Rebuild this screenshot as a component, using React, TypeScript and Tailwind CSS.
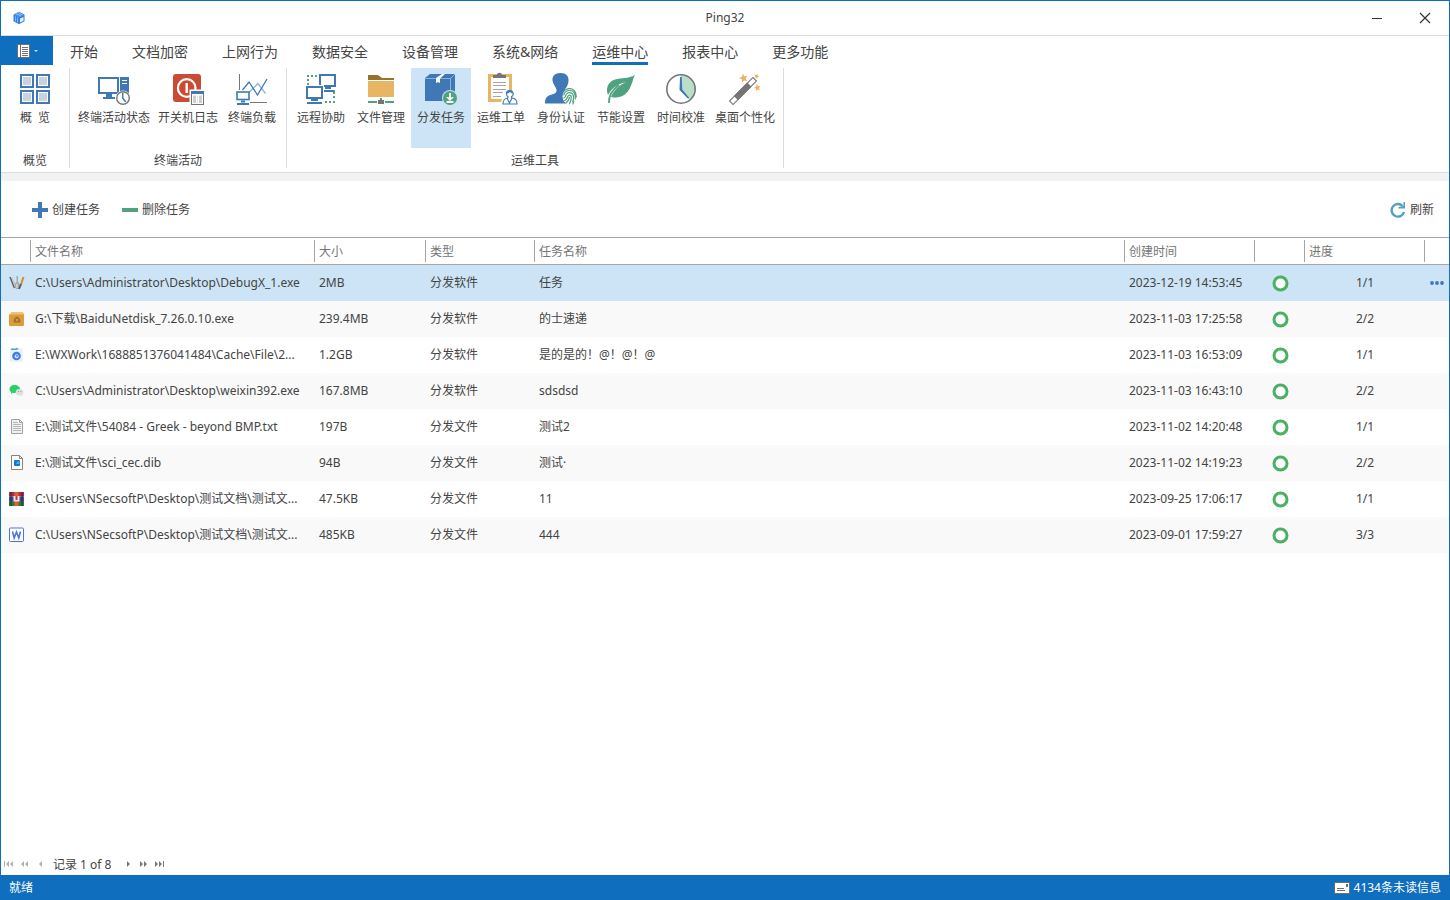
import React, { useState } from 'react';

interface Tool {
  label: string;
  icon: React.ReactNode;
}

interface ToolGroup {
  name: string;
  tools: Tool[];
}

interface Task {
  icon: React.ReactNode;
  file: string;
  size: string;
  type: string;
  name: string;
  created: string;
  progress: string;
}

const BLUE = '#3f78b4';
const GREEN = '#4fa17f';
const GRAY = '#757575';

const Icon32: React.FC<{ children: React.ReactNode }> = ({ children }) => (
  <svg width="32" height="32" viewBox="0 0 32 32" fill="none" aria-hidden="true" className="shrink-0 overflow-visible">
    {children}
  </svg>
);

const Icon16: React.FC<{ children: React.ReactNode }> = ({ children }) => (
  <svg width="16" height="16" viewBox="0 0 16 16" fill="none" aria-hidden="true" className="block">
    {children}
  </svg>
);

/* ---------- Ribbon icons ---------- */

const OverviewIcon = () => (
  <Icon32>
    {[[1, 1], [17, 1], [1, 17], [17, 17]].map(([x, y]) => (
      <g key={`${x}-${y}`}>
        <rect x={x + 1} y={y + 1} width="12" height="12" stroke={BLUE} strokeWidth="2" />
        <rect x={x + 3} y={y + 3} width="8" height="8" fill="#c5d3e5" />
      </g>
    ))}
  </Icon32>
);

const StatusIcon = () => (
  <Icon32>
    <rect x="1" y="5" width="19" height="15" stroke={BLUE} strokeWidth="2" />
    <path d="M8 21h6v3h3v2H5v-2h3z" fill={BLUE} />
    <rect x="22" y="4" width="9" height="22" fill={BLUE} />
    <path d="M24 7.5h5M24 10.5h5" stroke="#fff" strokeWidth="1" />
    <circle cx="25" cy="25" r="7.5" fill="#fff" />
    <circle cx="25" cy="25" r="6.3" fill="#fff" stroke={GRAY} strokeWidth="1.4" />
    <path d="M24.7 20v5l3 4" stroke={BLUE} strokeWidth="1.5" />
  </Icon32>
);

const PowerLogIcon = () => (
  <Icon32>
    <rect x="1" y="1" width="28" height="28" rx="3" fill="#cb4a33" />
    <circle cx="14.7" cy="15" r="8.8" stroke="#fff" strokeWidth="2.2" />
    <path d="M14.7 10v10" stroke="#fff" strokeWidth="2.4" />
    <rect x="17.5" y="16.5" width="15" height="16" fill="#fff" />
    <rect x="19.5" y="18.5" width="12" height="13" fill="#fff" stroke={GRAY} />
    <rect x="19" y="18" width="13" height="3" fill={BLUE} />
    <rect x="21" y="22.5" width="3" height="7.5" fill="#cfcfcf" />
    <rect x="27" y="22.5" width="3" height="7.5" fill="#cfcfcf" />
    <path d="M25.5 22.5v7.5" stroke="#dedede" />
  </Icon32>
);

const LoadIcon = () => (
  <Icon32>
    <path d="M3.5 1v16M14 29.5h17" stroke={GRAY} />
    <path d="M12.5 20 22 10.5l7.5 10" stroke="#8fb4dc" strokeWidth="1.3" />
    <path d="M6.5 17 13 9l8.5 13L31 6" stroke={BLUE} strokeWidth="1.3" />
    <rect x="1" y="19" width="12" height="7.5" fill="#fff" stroke={BLUE} strokeWidth="1.6" />
    <path d="M5 28.5h4M1 31h12" stroke={BLUE} strokeWidth="2" />
  </Icon32>
);

const RemoteIcon = () => (
  <Icon32>
    <path
      d="M2 2h2v2H2zM6 2h2v2H6zM10 2h2v2h-2zM2 6h2v2H2zM2 10h2v2H2zM28 19h2v2h-2zM28 23h2v2h-2zM28 28h2v2h-2zM24 28h2v2h-2zM20 28h2v2h-2z"
      fill={GREEN}
    />
    <rect x="15" y="2" width="15" height="11" fill="#fff" stroke={BLUE} strokeWidth="2" />
    <path d="M20 15h6" stroke={BLUE} strokeWidth="2" />
    <path d="M18.5 17.5h11v1h-11z" stroke={BLUE} />
    <rect x="0" y="12" width="19" height="16" fill="#fff" />
    <rect x="2" y="14" width="15" height="11" fill="#fff" stroke={BLUE} strokeWidth="2" />
    <path d="M6 27h7" stroke={BLUE} strokeWidth="2" />
    <rect x="2.5" y="29.5" width="14" height="1" stroke={BLUE} />
  </Icon32>
);

const FolderIcon = () => (
  <Icon32>
    <path d="M3 2h10l4 3h12v2H3z" fill="#96732f" />
    <rect x="3" y="8" width="26" height="16" fill="#e8b564" />
    <path d="M3 29h26M16 25v3" stroke={GREEN} strokeWidth="2" />
    <path d="M12 28h8v3h-8z" fill="#fff" />
    <path d="M13 27h6v4h-6z" fill={GRAY} />
  </Icon32>
);

const PackageIcon = () => (
  <Icon32>
    <path d="M5 1h25v22l-4 5H0V5z" fill={BLUE} />
    <path d="M0 5.500h25.500V28M25.500 5.500 30 1" stroke="#a9c8e4" strokeWidth=".7" />
    <path d="M17 1h3l-5 4.500V10l-2-1-2 1V5z" fill="#fff" />
    <circle cx="25" cy="25" r="8" fill="#cce4f6" />
    <circle cx="25" cy="25" r="7" fill={GREEN} />
    <path d="M25 20v6M21.500 29h7" stroke="#fff" strokeWidth="1.800" />
    <path d="m21 24 4 4 4-4h-2l-2 1.500-2-1.500z" fill="#fff" />
  </Icon32>
);

const WorkOrderIcon = () => (
  <Icon32>
    <rect x="4.500" y="2.500" width="21" height="25" fill="#fff" stroke="#e8b564" strokeWidth="3" />
    <path d="M8 5V2h4c0-3 5-3 5 0h4v3z" fill={GRAY} />
    <path d="M8 9.500h13M8 12.500h13M8 16.500h13M8 19.500h10M8 23.500h8" stroke="#a5a5a5" />
    <path d="M16 32.500c0-7 2-8.500 5-9.500-3-8 9-8 6.500 0 3.500 1 5.500 3 5.500 9.500z" fill="#fff" />
    <path
      d="M24.500 17.500c-4 0-3.500 5-1.500 6.200v1c-3.500.8-5 2-5 6.300h14c0-4.300-1.500-5.500-5.500-6.300v-1c2.500-1.200 2.500-6.200-2-6.200zM22 25l2.500 5 2.500-5"
      stroke={BLUE}
      strokeWidth="1.100"
    />
    <path d="M21 20.500c2 0 3-.5 4-1.500 1 1 2 1.500 3 1.500-1-4.500-6-4.500-7 0z" fill={BLUE} />
  </Icon32>
);

const IdentityIcon = () => (
  <Icon32>
    <path
      d="M15.500 0C21 0 24 3 23.500 8c-.3 3-1.500 5.500-3 7.500-1 1.500-.5 4 1 5l3 1.500v8.500H0c0-5 1.500-7.500 6-8.700 4-1.100 6-2 5.500-5C11 14 8 11.500 7.500 7.500 7 3 10 0 15.500 0z"
      fill={BLUE}
    />
    <circle cx="25.5" cy="23.5" r="8" fill="#fff" />
    <g stroke={GREEN} strokeWidth="1.2" strokeLinecap="round">
      <path d="M20.500 17c2.700-2 6.800-1.700 9 .8 1.500 1.800 1.800 3.700 1.800 6.200M18.800 22c.6-2.500 3-4.500 6-4.500 4 0 6 3 5.500 8.500" />
      <path d="M18.800 25c2-.5 1.500-2.500 2.700-4 2-2.500 6.800-1.500 7 2.500.1 2 0 3.500-.7 5.500" />
      <path d="M19.500 27.500c3-.8 2.700-3.500 3.800-4.800 1-1 3-.4 3 1.300 0 2.500-.5 4.500-1.800 6.800" />
      <path d="M21 29.500c2-1 3-3 3.400-5.200M28 31l.8-2.500" />
    </g>
  </Icon32>
);

const LeafIcon = () => (
  <Icon32>
    <path d="M30 2c-2 3-2 7-5 13-3.500 7-10 11-19 9 3-7 7-11 15-15C12 11 6 16 3 22 .5 15 3 9 10 6.500 17 4.500 23 6 30 2z" fill={GREEN} />
    <path d="M4 30c-.5-7 3-13 10-18" stroke={GREEN} strokeWidth="1.8" />
  </Icon32>
);

const TimeIcon = () => (
  <Icon32>
    <circle cx="16" cy="16" r="14" fill="#fff" />
    <path d="M15.500 2A14 14 0 0 1 25.500 26.500L15.500 17z" fill="#b9dfca" />
    <circle cx="16" cy="16" r="14.200" stroke={GRAY} strokeWidth="1.600" />
    <path d="m15 4 1.700.1.600 12.400 7 8.500-1.200.7-8.600-8.700z" fill={BLUE} />
  </Icon32>
);

const WandIcon = () => (
  <Icon32>
    <g transform="rotate(-45 14 18)">
      <rect x="-2.500" y="15.500" width="33" height="5" fill="#fff" stroke={GRAY} strokeWidth="1.100" />
      <rect x="4" y="15" width="19" height="6" fill={GRAY} />
    </g>
    <path d="m14 .5 1.200 2.700 3.100-.2-1.700 2.500 1.600 2.700-3-.8L13 9.500l-.2-3.200L10 5l2.900-1.200z" fill="#e8b564" />
    <path d="m28.500.8.1 1.800 1.700.8-1.700.7-.3 1.900-1.300-1.400-1.900.2 1-1.600-.8-1.700 1.900.4zM28 11l1 2 2.300-.1-1.300 2 1 2-2.300-.5-1.600 1.600-.2-2.300-2-1 2-1z" fill="#e8b564" />
  </Icon32>
);

/* ---------- File type icons ---------- */

const DebugIcon = () => (
  <Icon16>
    <path d="m1 2 4.500 11" stroke="#5f656b" strokeWidth="1.600" />
    <path d="m3 2.500 3.500 9" stroke="#c3c6c9" strokeWidth="1.600" />
    <path d="M7.500 1h1.500v6l1.500 1.500v3.500l-1.500 2H7l-1-2V8.500L7.500 7z" fill="#a4a9ad" />
    <path d="M8 9v4" stroke="#eef0f1" />
    <path d="M14.500 2 12 9.500" stroke="#d08f2c" strokeWidth="2" />
    <path d="m12 9-2 5" stroke="#5a5d60" strokeWidth="2" />
  </Icon16>
);

const BaiduBoxIcon = () => (
  <Icon16>
    <path d="M3 1h10l2 2v10.500c0 1-.5 1.500-1.500 1.500h-12C.5 15 0 14.500 0 13.500V4z" fill="#d99e3b" />
    <path d="M3 1h10l2 2.500H0z" fill="#efc36f" />
    <path d="M8 5.500c2 0 4 4 3.500 5.500-.5 1-2 .5-3.500.5s-3 .5-3.500-.5C4 9.500 6 5.500 8 5.500z" fill="#a9712b" />
    <circle cx="8" cy="9" r="1" fill="#e3ad50" />
  </Icon16>
);

const CloudSetupIcon = () => (
  <Icon16>
    <rect x="1" y="1" width="13" height="14" rx="1" fill="#eef0f3" />
    <path d="M2 1.500h5V.5L10 2 7 3H2z" fill="#3aa9f0" />
    <circle cx="7.500" cy="9" r="4.300" fill="#3b7de8" />
    <circle cx="7.700" cy="9.300" r="2" fill="#dfeafc" />
    <circle cx="8" cy="9" r=".9" fill="#3b7de8" />
  </Icon16>
);

const WeixinIcon = () => (
  <Icon16>
    <path d="M5.500 2C2.500 2 .5 3.800.5 6c0 1.300.6 2.300 1.700 3L2 11l1.800-1.200c3.700.8 7.200-.8 7.200-3.800C11 3.800 8.500 2 5.500 2z" fill="#24d366" />
    <ellipse cx="10.500" cy="9.200" rx="3.800" ry="3.200" fill="#dedede" />
    <path d="m13 11 .8 2-2.300-1z" fill="#dedede" />
    <path d="M9 8.500h1M11.500 8.500h1" stroke="#999" />
  </Icon16>
);

const TextFileIcon = () => (
  <Icon16>
    <path d="M2.500.5h8l3 3v11h-11z" fill="#f1f1f1" stroke="#a0a0a0" />
    <path d="M10.500.5v3h3" stroke="#a0a0a0" />
    <path d="M4 3.500h5M4 5.500h8M4 7.500h8M4 9.500h8M4 11.500h8" stroke="#b5b5b5" />
  </Icon16>
);

const ImageFileIcon = () => (
  <Icon16>
    <path d="M2.500.5h8l3 3v11h-11z" fill="#fff" stroke="#858585" />
    <path d="M10.500.5v3h3" stroke="#858585" />
    <rect x="5" y="5" width="6" height="6" rx="1" fill="#1476d4" />
    <path d="m7 9 2-3 1.500 1.500v1L9 9z" fill="#57b8f2" />
  </Icon16>
);

const ArchiveIcon = () => (
  <Icon16>
    <rect x="0" y="1" width="15" height="4.500" fill="#b52b45" />
    <rect x="0" y="5.500" width="15" height="4.500" fill="#3b4aa8" />
    <rect x="0" y="10" width="15" height="5" fill="#2c7a3b" />
    <path d="M2 1v14M13 1v14" stroke="#2b2340" />
    <path d="M5.500 1h4v14h-4z" fill="#e0622a" />
    <rect x="4.500" y="5" width="6" height="5.500" fill="#f1e6e0" />
    <path d="M7.500 5v4" stroke="#c6393a" strokeWidth="2" />
  </Icon16>
);

const WordIcon = () => (
  <Icon16>
    <rect x=".5" y="1" width="14" height="13.500" rx="1" fill="#fff" stroke="#4c73e0" />
    <path d="m3.500 4.500 1.700 6.500 2.300-6 2.300 6 1.700-6.500" stroke="#4c73e0" strokeWidth="1.600" />
  </Icon16>
);

/* ---------- Data ---------- */

const tabs = ['开始', '文档加密', '上网行为', '数据安全', '设备管理', '系统&网络', '运维中心', '报表中心', '更多功能'];

const groups: ToolGroup[] = [
  { name: '概览', tools: [{ label: '概  览', icon: <OverviewIcon /> }] },
  {
    name: '终端活动',
    tools: [
      { label: '终端活动状态', icon: <StatusIcon /> },
      { label: '开关机日志', icon: <PowerLogIcon /> },
      { label: '终端负载', icon: <LoadIcon /> },
    ],
  },
  {
    name: '运维工具',
    tools: [
      { label: '远程协助', icon: <RemoteIcon /> },
      { label: '文件管理', icon: <FolderIcon /> },
      { label: '分发任务', icon: <PackageIcon /> },
      { label: '运维工单', icon: <WorkOrderIcon /> },
      { label: '身份认证', icon: <IdentityIcon /> },
      { label: '节能设置', icon: <LeafIcon /> },
      { label: '时间校准', icon: <TimeIcon /> },
      { label: '桌面个性化', icon: <WandIcon /> },
    ],
  },
];

const tasks: Task[] = [
  { icon: <DebugIcon />, file: 'C:\\Users\\Administrator\\Desktop\\DebugX_1.exe', size: '2MB', type: '分发软件', name: '任务', created: '2023-12-19 14:53:45', progress: '1/1' },
  { icon: <BaiduBoxIcon />, file: 'G:\\下载\\BaiduNetdisk_7.26.0.10.exe', size: '239.4MB', type: '分发软件', name: '的士速递', created: '2023-11-03 17:25:58', progress: '2/2' },
  { icon: <CloudSetupIcon />, file: 'E:\\WXWork\\1688851376041484\\Cache\\File\\2...', size: '1.2GB', type: '分发软件', name: '是的是的！@！@！@', created: '2023-11-03 16:53:09', progress: '1/1' },
  { icon: <WeixinIcon />, file: 'C:\\Users\\Administrator\\Desktop\\weixin392.exe', size: '167.8MB', type: '分发软件', name: 'sdsdsd', created: '2023-11-03 16:43:10', progress: '2/2' },
  { icon: <TextFileIcon />, file: 'E:\\测试文件\\54084 - Greek - beyond BMP.txt', size: '197B', type: '分发文件', name: '测试2', created: '2023-11-02 14:20:48', progress: '1/1' },
  { icon: <ImageFileIcon />, file: 'E:\\测试文件\\sci_cec.dib', size: '94B', type: '分发文件', name: '测试·', created: '2023-11-02 14:19:23', progress: '2/2' },
  { icon: <ArchiveIcon />, file: 'C:\\Users\\NSecsoftP\\Desktop\\测试文档\\测试文...', size: '47.5KB', type: '分发文件', name: '11', created: '2023-09-25 17:06:17', progress: '1/1' },
  { icon: <WordIcon />, file: 'C:\\Users\\NSecsoftP\\Desktop\\测试文档\\测试文...', size: '485KB', type: '分发文件', name: '444', created: '2023-09-01 17:59:27', progress: '3/3' },
];

const columns = ['', '文件名称', '大小', '类型', '任务名称', '创建时间', '', '进度', ''];

/* ---------- Sections ---------- */

const TitleBar = () => (
  <header className="grid h-[35px] shrink-0 grid-cols-[1fr_auto_1fr] items-center border-b border-[#dcdcdc]">
    <svg width="14" height="14" viewBox="0 0 14 14" aria-hidden="true" className="ml-[11px]">
      <path d="M7 .8 12.500 3.700v6.600L7 13.200 1.500 10.300V3.700z" fill="#2f7fe6" />
      <path d="M7 .8 12.500 3.700 7 6.300 1.500 3.700z" fill="#4c93ee" />
      <path d="M8 7.500 11.500 6v3.800L8 11.600z" fill="#e3effd" />
      <path d="M3.500 5.500v5M5.500 6.500v5M4 2.500l5 2.500M6 1.500l4.500 2.500" stroke="#a9cffa" strokeWidth=".7" />
    </svg>
    <h1>Ping32</h1>
    <div className="flex justify-end">
      <button className="flex h-[34px] w-12 items-center justify-center" aria-label="最小化">
        <svg width="12" height="12" viewBox="0 0 12 12" aria-hidden="true">
          <path d="M1 6.500h10" stroke="#333" />
        </svg>
      </button>
      <button className="flex h-[34px] w-12 items-center justify-center" aria-label="关闭">
        <svg width="12" height="12" viewBox="0 0 12 12" aria-hidden="true">
          <path d="m1 1 10 10M11 1 1 11" stroke="#333" strokeWidth="1.200" />
        </svg>
      </button>
    </div>
  </header>
);

const TaskRow: React.FC<{ task: Task; selected: boolean; onSelect: () => void }> = ({ task, selected, onSelect }) => (
  <tr onClick={onSelect} className={selected ? 'bg-[#cce4f6]' : 'even:bg-[#f9f9f9]'}>
    <td className="h-9 pl-2">{task.icon}</td>
    <td className="whitespace-nowrap pl-1">{task.file}</td>
    <td className="pl-1">{task.size}</td>
    <td className="pl-1">{task.type}</td>
    <td className="pl-1">{task.name}</td>
    <td className="whitespace-nowrap pl-1">{task.created}</td>
    <td>
      <svg width="18" height="18" viewBox="0 0 18 18" className="mx-auto block" role="img" aria-label="完成">
        <circle cx="9.500" cy="9.500" r="6.500" fill="#fff" stroke="#4bb064" strokeWidth="3" />
      </svg>
    </td>
    <td className="text-center">{task.progress}</td>
    <td>
      {selected && (
        <button className="flex w-full justify-center" aria-label="更多">
          <svg width="16" height="6" viewBox="0 0 16 6" fill={BLUE} aria-hidden="true">
            <circle cx="3" cy="3" r="1.900" />
            <circle cx="8" cy="3" r="1.900" />
            <circle cx="13" cy="3" r="1.900" />
          </svg>
        </button>
      )}
    </td>
  </tr>
);

const PagerButton: React.FC<{ label: string; d: string; color: string }> = ({ label, d, color }) => (
  <button className="flex w-4 justify-center" aria-label={label}>
    <svg width="10" height="6" viewBox="0 0 10 6" fill={color} aria-hidden="true">
      <path d={d} />
    </svg>
  </button>
);

const App: React.FC = () => {
  const [activeTab, setActiveTab] = useState('运维中心');
  const [activeTool, setActiveTool] = useState('分发任务');
  const [selected, setSelected] = useState(0);

  return (
    <div className="flex min-h-screen flex-col border-x border-t border-[#106ebe] bg-white font-['Noto_Sans','Noto_Sans_CJK_SC',sans-serif] text-xs text-[#444444]">
      <TitleBar />

      <nav className="flex h-[29px] shrink-0">
        <button className="flex w-[52px] items-center justify-center gap-1 bg-[#106ebe]" aria-label="文件">
          <svg width="13" height="14" viewBox="0 0 13 14" aria-hidden="true">
            <rect x=".5" y=".5" width="12" height="13" fill="#fff" stroke="#6e6e6e" />
            <path d="M3.500 1v12" stroke="#6e6e6e" />
            <path d="M5 3.500h6M5 5.500h6M5 7.500h6M5 9.500h6M5 11.500h6" stroke="#6e6e6e" />
          </svg>
          <svg width="4" height="2" viewBox="0 0 4 2" aria-hidden="true">
            <path d="M0 0h4L2 2z" fill="#d5d5d5" />
          </svg>
        </button>
        {tabs.map((tab) => (
          <button key={tab} onClick={() => setActiveTab(tab)} className="px-[17px] text-sm">
            <span className={`flex h-[29px] items-center border-b-3 pt-1.5 ${tab === activeTab ? 'border-[#106ebe]' : 'border-transparent'}`}>
              {tab}
            </span>
          </button>
        ))}
      </nav>

      <div className="flex h-27 shrink-0 border-b border-[#dcdcdc] pt-[3px] pb-1">
        {groups.map((group) => (
          <section key={group.name} className="flex flex-col border-r border-[#dcdcdc] px-1">
            <div className="flex">
              {group.tools.map((tool) => (
                <button
                  key={tool.label}
                  onClick={() => setActiveTool(tool.label)}
                  className={`flex h-20 min-w-[60px] flex-col items-center gap-[5px] px-1 pt-[5px] ${
                    tool.label === activeTool ? 'bg-[#cce4f6]' : 'bg-transparent'
                  }`}
                >
                  {tool.icon}
                  <span className="whitespace-pre">{tool.label}</span>
                </button>
              ))}
            </div>
            <h2 className="mt-[5px] text-center leading-[16px]">{group.name}</h2>
          </section>
        ))}
      </div>
      <div className="h-2 shrink-0 bg-[#f2f2f2]" />

      <main className="flex grow flex-col">
        <div className="flex h-14 shrink-0 items-center pt-0.5 pr-[15px] pl-[31px]">
          <button className="flex items-center gap-1">
            <Icon16>
              <path d="M6 0h4v6h6v4h-6v6H6v-6H0V6h6z" fill={BLUE} />
            </Icon16>
            创建任务
          </button>
          <button className="ml-[22px] flex items-center gap-1">
            <Icon16>
              <path d="M0 6h16v4H0z" fill={GREEN} />
            </Icon16>
            删除任务
          </button>
          <button className="ml-auto flex items-center gap-1">
            <Icon16>
              <path d="M12.500 4A6.300 6.300 0 1 0 14 10" stroke="#539fc0" strokeWidth="2.400" />
              <path d="M15 0v6.500H8.500V5l3.500-.5 1.500-1V0z" fill="#539fc0" />
            </Icon16>
            刷新
          </button>
        </div>

        <table className="w-full table-fixed border-separate border-spacing-0">
          <colgroup>
            <col className="w-[30px]" />
            <col className="w-[284px]" />
            <col className="w-[111px]" />
            <col className="w-[109px]" />
            <col />
            <col className="w-[130px]" />
            <col className="w-[50px]" />
            <col className="w-[120px]" />
            <col className="w-6" />
          </colgroup>
          <thead>
            <tr>
              {columns.map((column, i) => (
                <th key={i} className="h-7 border-y border-[#a6a6a6] p-0 text-left font-normal text-[#757575]">
                  <div className={`flex h-[22px] items-center border-[#a6a6a6] pt-0.5 pl-1 ${i < columns.length - 1 ? 'border-r' : ''}`}>
                    {column}
                  </div>
                </th>
              ))}
            </tr>
          </thead>
          <tbody>
            {tasks.map((task, i) => (
              <TaskRow key={i} task={task} selected={i === selected} onSelect={() => setSelected(i)} />
            ))}
          </tbody>
        </table>

        <div className="mt-auto flex h-[22px] shrink-0 items-center">
          <PagerButton label="第一条" color="#b0b0b0" d="M0 0h1v6H0zM5 0v6L2 3zM9 0v6L6 3z" />
          <PagerButton label="上一页" color="#b0b0b0" d="M4 0v6L1 3zM8 0v6L5 3z" />
          <PagerButton label="上一条" color="#b0b0b0" d="M6 0v6L3 3z" />
          <span className="pt-0.5 pr-2 pl-1">记录 1 of 8</span>
          <PagerButton label="下一条" color="#757575" d="M5 0v6l3-3z" />
          <PagerButton label="下一页" color="#757575" d="M2 0v6l3-3zM6 0v6l3-3z" />
          <PagerButton label="最后一条" color="#757575" d="M1 0v6l3-3zM5 0v6l3-3zM9 0h1v6H9z" />
        </div>
      </main>

      <footer className="flex h-[25px] shrink-0 items-center justify-between bg-[#106ebe] px-2 text-white">
        <span>就绪</span>
        <a href="#messages" className="flex items-center gap-1">
          <svg width="16" height="12" viewBox="0 0 16 12" aria-hidden="true">
            <rect x=".5" y=".5" width="15" height="11" fill="#fff" stroke="#6e6e6e" />
            <path d="M3 6.500h7M3 8.500h8" stroke="#6e6e6e" />
            <rect x="12" y="2" width="2" height="3" fill={BLUE} />
          </svg>
          4134条未读信息
        </a>
      </footer>
    </div>
  );
};

export default App;
